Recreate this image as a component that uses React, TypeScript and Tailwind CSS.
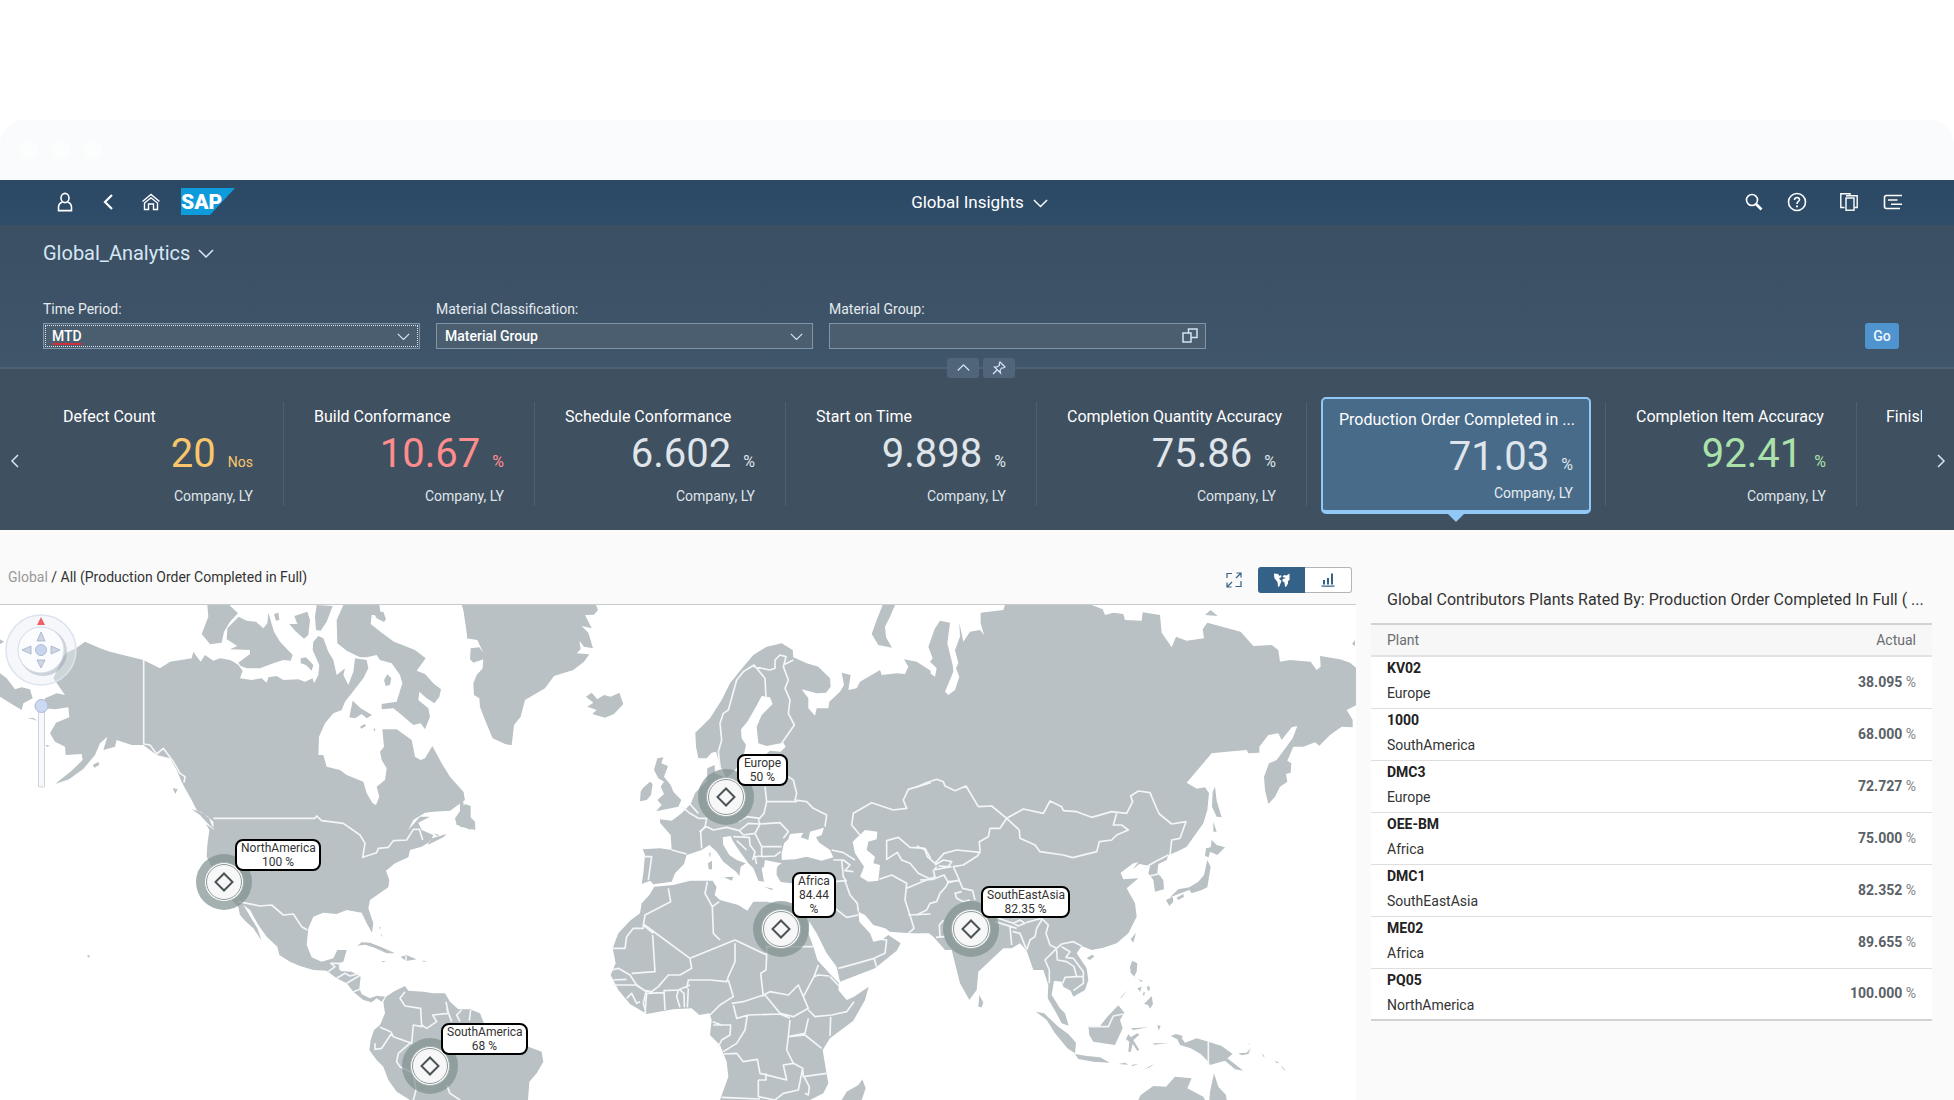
import React from "react";

const tiles = [
  { title: "Defect Count", value: "20", unit: "Nos", unitSize: "text-[14px]", color: "text-[#f9c66b]", width: "w-[251px]" },
  { title: "Build Conformance", value: "10.67", unit: "%", unitSize: "text-[16px]", color: "text-[#ff8d8d]", width: "w-[251px]" },
  { title: "Schedule Conformance", value: "6.602", unit: "%", unitSize: "text-[16px]", color: "text-[#dfe5ea]", width: "w-[251px]" },
  { title: "Start on Time", value: "9.898", unit: "%", unitSize: "text-[16px]", color: "text-[#dfe5ea]", width: "w-[251px]" },
  { title: "Completion Quantity Accuracy", value: "75.86", unit: "%", unitSize: "text-[16px]", color: "text-[#dfe5ea]", width: "w-[270px]" },
  { title: "Production Order Completed in ...", value: "71.03", unit: "%", unitSize: "text-[16px]", color: "text-[#dfe5ea]", width: "", selected: true },
  { title: "Completion Item Accuracy", value: "92.41", unit: "%", unitSize: "text-[16px]", color: "text-[#abe2ab]", width: "w-[251px]" },
];

const plants = [
  { id: "KV02", region: "Europe", actual: "38.095" },
  { id: "1000", region: "SouthAmerica", actual: "68.000" },
  { id: "DMC3", region: "Europe", actual: "72.727" },
  { id: "OEE-BM", region: "Africa", actual: "75.000" },
  { id: "DMC1", region: "SouthEastAsia", actual: "82.352" },
  { id: "ME02", region: "Africa", actual: "89.655" },
  { id: "PQ05", region: "NorthAmerica", actual: "100.000" },
];

// x / y are in map units (1356 x 495)
const pins = [
  { name: "NorthAmerica", value: "100 %", x: 224, y: 277, labelX: 235, labelY: 234, labelWidth: "w-[86px]" },
  { name: "Europe", value: "50 %", x: 726, y: 192, labelX: 737, labelY: 149, labelWidth: "w-[51px]" },
  { name: "Africa", value: "84.44 %", x: 781, y: 324, labelX: 792, labelY: 267, labelWidth: "w-[44px]" },
  { name: "SouthEastAsia", value: "82.35 %", x: 971, y: 324, labelX: 981, labelY: 281, labelWidth: "w-[89px]" },
  { name: "SouthAmerica", value: "68 %", x: 430, y: 461, labelX: 441, labelY: 418, labelWidth: "w-[87px]" },
];

// land shapes, west part
const landWest = [
  "M160,235 L195,285 170,280 135,295 132,325 165,328 205,322 208,352 168,368 150,400 165,425 195,440 197,465 245,462 248,480 215,512 165,552 207,538 250,507 285,465 300,430 322,410 310,450 345,440 350,420 395,435 430,435 470,465 510,475 530,510 545,545 555,565 575,600 590,630 625,650 642,690 618,672 628,690 622,735 620,770 640,810 660,870 700,905 715,920 720,945 735,962 760,985 785,1022 772,985 748,945 730,915 750,930 775,975 800,1010 832,1040 838,1065 870,1085 900,1098 940,1110 980,1112 1010,1135 1040,1150 1060,1175 1090,1200 1115,1207 1130,1195 1145,1205 1155,1190 1130,1187 1110,1195 1085,1183 1078,1165 1082,1130 1055,1115 1022,1113 1015,1090 1030,1085 1040,1050 1012,1050 1000,1075 965,1085 935,1072 920,1035 925,985 940,950 970,938 1010,942 1040,930 1085,938 1100,970 1116,998 1120,970 1105,925 1110,900 1165,862 1168,840 1158,812 1185,790 1225,772 1230,750 1265,740 1290,725 1300,705 1265,690 1255,668 1290,650 1260,650 1225,690 1240,660 1275,638 1300,635 1350,632 1395,600 1390,575 1350,530 1325,490 1297,438 1275,475 1262,480 1245,470 1235,420 1190,388 1147,388 1152,440 1140,455 1145,480 1160,505 1155,540 1130,560 1138,590 1128,615 1118,610 1100,580 1090,545 1040,525 1020,510 980,500 970,465 955,465 957,410 975,370 1000,340 1025,330 1035,305 1055,280 1090,235 1105,205 1100,180 1065,175 1060,215 1045,255 1030,225 1035,205 1010,225 1000,180 985,155 970,115 955,108 940,125 938,150 958,195 955,225 942,250 938,235 915,245 895,238 850,240 830,228 805,232 800,248 785,235 755,240 720,235 728,212 715,195 700,185 690,180 660,175 640,182 615,165 602,185 580,155 575,175 510,185 480,205 430,180 390,170 330,155 300,145 255,125 228,145 200,158 190,170Z",
  "M0,220 L20,235 45,268 65,262 90,268 98,295 70,310 65,330 40,315 0,290Z",
  "M0,118 L12,125 0,132Z",
  "M82,354 L100,354 112,362 98,358Z",
  "M135,434 L150,437 142,441Z",
  "M278,495 L295,486 298,494 284,503Z",
  "M622,15 L688,15 714,40 690,65 672,95 665,128 630,133 605,102 625,50Z",
  "M716,50 L740,62 768,65 790,85 802,70 805,38 822,95 840,125 878,165 872,182 850,180 820,190 780,205 740,205 722,198 715,188 750,162 750,150 690,148 712,138 680,118 682,85Z",
  "M822,42 L835,38 838,60 828,62Z",
  "M883,48 L922,35 930,60 925,105 912,116 885,92 868,72 892,72Z",
  "M950,15 L998,18 980,65 962,92 948,90 945,50Z",
  "M902,175 L918,172 940,195 935,212 918,195 902,190Z",
  "M1030,15 L1138,15 1142,40 1115,45 1112,72 1145,98 1182,125 1245,150 1277,175 1250,212 1275,222 1300,250 1323,268 1318,290 1303,310 1280,295 1258,275 1255,300 1285,325 1290,350 1275,388 1262,370 1240,375 1205,345 1180,325 1145,328 1145,312 1190,305 1207,250 1200,225 1175,190 1140,180 1130,165 1100,172 1080,172 1040,152 1012,130 1010,60Z",
  "M1152,240 L1162,223 1174,235 1170,255 1157,258Z",
  "M1058,302 L1082,325 1116,345 1100,355 1085,342 1065,355 1048,352Z",
  "M1080,380 L1094,372 1098,378 1084,386Z",
  "M1120,386 L1126,386 1124,396Z",
  "M1118,35 L1150,35 1158,58 1152,66 1130,55Z",
  "M1388,15 L1412,15 1412,118 1402,112Z",
  "M1365,655 L1395,612 1412,618 1412,690 1390,680 1370,675Z",
  "M1283,735 L1295,715 1340,702 1330,712Z",
  "M1300,700 L1318,705 1312,708Z",
  "M575,628 L602,635 628,655 640,665 640,687 618,665 600,645Z",
  "M518,565 L533,567 526,582Z",
  "M1072,1037 L1085,1027 1110,1028 1145,1042 1185,1060 1160,1060 1120,1042 1095,1034Z",
  "M1202,1070 L1220,1066 1250,1078 1218,1083Z",
  "M1142,1083 L1158,1084 1150,1087Z",
  "M1266,1082 L1280,1083 1272,1086Z",
  "M1138,980 L1142,982 1140,990Z M1142,1000 L1148,1010 1144,1008Z",
  "M262,1064 L271,1068 264,1073Z",
  "M1150,1205 L1158,1190 1180,1175 1215,1158 1225,1172 1270,1175 1300,1180 1335,1180 1350,1205 1375,1228 1410,1228 1440,1240 1452,1270 1520,1300 1585,1340 1625,1355 1630,1385 1610,1420 1588,1445 1584,1500 1230,1500 1190,1475 1165,1440 1150,1400 1130,1380 1108,1350 1112,1320 1122,1290 1140,1275 1155,1240Z",
];

// Europe, Africa and Greenland
const landCenter = [
  "M5,15 L408,15 414,30 402,44 375,45 395,85 365,78 385,98 399,145 372,140 358,122 362,148 350,160 388,163 372,185 340,210 282,228 255,265 195,300 182,350 162,375 155,436 135,432 98,415 75,360 60,320 58,295 42,285 40,250 50,225 68,205 70,178 40,188 30,178 32,145 58,142 70,158 52,120 20,115 28,80Z",
  "M378,290 L395,278 412,298 432,285 452,290 478,278 490,312 462,342 435,353 397,342 410,330 382,320 400,308Z",
  "M592,475 L610,472 604,490 624,498 612,530 632,555 640,575 664,600 655,620 625,626 588,634 605,615 592,600 612,582 602,560 612,545 595,535 582,510Z",
  "M548,565 L570,545 578,552 573,585 560,600 540,604 542,575Z",
  "M0,568 L12,580 8,598 15,635 45,665 46,690 25,685 0,680Z",
  "M545,852 L550,820 555,765 548,748 600,745 635,750 632,705 600,668 600,658 635,662 665,640 692,612 705,580 722,560 740,545 742,505 764,495 765,520 790,530 830,540 880,530 915,515 915,465 930,452 962,455 977,440 970,428 920,438 895,430 890,380 905,345 938,312 930,292 905,288 888,320 862,365 843,388 845,415 858,435 850,470 830,505 800,535 782,500 768,455 755,458 740,475 715,475 708,440 706,398 750,355 785,300 810,250 850,200 880,165 920,140 965,130 998,150 1000,172 1040,190 1075,200 1110,235 1112,260 1098,278 1070,280 1025,268 1045,295 1045,325 1065,347 1070,325 1105,325 1108,305 1140,275 1152,255 1145,218 1172,225 1165,270 1190,265 1200,245 1260,210 1265,225 1310,220 1335,222 1345,200 1332,178 1370,185 1412,212 1412,1000 1350,1000 1290,995 1275,985 1240,975 1215,945 1195,935 1198,965 1230,1000 1240,1025 1265,1020 1285,1005 1322,1030 1310,1052 1245,1105 1140,1145 1130,1100 1100,1060 1070,1000 1045,960 1040,930 1040,850 995,850 962,846 950,825 950,800 965,790 940,785 915,780 912,800 905,805 912,845 895,842 880,805 865,790 840,755 820,725 812,708 788,712 790,735 808,765 830,780 857,790 842,800 838,828 828,815 790,785 770,755 748,735 725,750 680,765 672,792 645,820 635,845 580,853 570,842Z",
  "M792,832 L820,830 816,842Z",
  "M744,790 L756,782 756,808 746,808Z M747,760 L752,757 750,775Z",
  "M912,860 L940,866 935,870Z",
  "M1268,15 L1305,15 1290,50 1275,80 1278,112 1296,143 1255,135 1235,102 1250,60Z",
  "M583,860 L640,855 690,842 758,842 770,862 764,885 780,900 835,915 862,932 880,905 920,905 1000,920 1045,935 1048,960 1045,1000 1060,1040 1072,1080 1110,1122 1137,1150 1135,1170 1160,1200 1182,1190 1226,1160 1215,1200 1180,1262 1110,1315 1088,1350 1098,1410 1105,1450 1090,1480 1050,1500 780,1500 805,1430 800,1385 780,1335 750,1305 755,1260 748,1240 718,1245 695,1225 640,1228 560,1242 510,1212 475,1170 452,1125 467,1090 458,1045 475,1000 510,962 540,940 545,910 568,885Z",
  "M1145,1500 L1160,1475 1195,1455 1207,1438 1217,1465 1205,1500Z",
];

// Asia and Oceania
const landEast = [
  "M-10,192 L45,230 50,205 30,185 38,175 25,140 45,85 60,62 90,68 82,130 98,195 100,215 75,275 85,285 105,270 118,230 108,205 115,190 105,150 120,110 118,68 130,125 150,95 180,90 192,105 182,70 182,38 250,30 255,15 515,15 548,28 555,45 580,38 610,42 615,60 665,62 668,37 720,45 725,98 755,142 768,110 800,122 852,115 848,88 862,68 962,95 1000,138 1055,135 1075,150 1080,185 1110,180 1172,185 1190,210 1202,200 1200,168 1260,178 1290,188 1310,205 1310,315 1280,330 1298,360 1298,382 1265,380 1230,405 1198,437 1185,427 1150,440 1120,440 1102,482 1114,490 1112,518 1098,522 1102,545 1080,560 1065,590 1045,612 1035,570 1032,530 1047,490 1070,480 1118,415 1132,378 1115,382 1085,420 1075,400 1045,405 1018,440 1018,458 985,460 980,450 920,455 875,460 800,548 830,566 855,562 867,580 862,630 850,670 800,740 770,755 745,765 740,780 715,792 712,818 730,840 732,868 705,875 700,840 685,820 690,798 658,792 638,808 655,787 640,790 602,818 610,838 655,835 620,865 645,910 650,950 625,1000 590,1030 550,1043 515,1050 485,1038 470,1060 500,1105 505,1140 495,1170 460,1190 452,1172 430,1160 425,1145 402,1142 395,1185 420,1225 435,1240 446,1277 425,1270 405,1232 383,1195 385,1155 370,1110 340,1110 320,1052 300,1030 275,1045 250,1045 175,1115 170,1170 148,1200 120,1150 95,1050 75,1050 40,1010 25,998 -10,1000Z",
  "M855,45 L872,30 893,48Z M1296,132 L1305,120 1305,138Z",
  "M878,575 L885,560 890,602 905,652 890,650 876,620Z M880,665 L890,695 880,695Z",
  "M875,720 L890,735 915,742 892,765 870,755 866,772 855,768 858,745 872,742Z",
  "M862,780 L872,800 862,862 845,870 815,880 808,870 768,885 750,892 775,868 808,862 835,845 852,825Z",
  "M738,900 L758,890 760,905 748,918Z M770,893 L790,882 792,890 775,900Z",
  "M700,826 L722,828 732,862 708,875Z",
  "M648,998 L640,1028 632,1018Z M500,1075 L515,1065 524,1068 510,1080Z",
  "M178,1185 L190,1208 185,1222 175,1220Z",
  "M348,1235 L372,1240 415,1280 445,1302 468,1328 465,1360 442,1345 405,1300 380,1260Z",
  "M465,1362 L500,1368 540,1372 570,1388 520,1385 475,1377Z",
  "M505,1278 L540,1278 562,1250 595,1216 613,1238 600,1260 608,1285 585,1335 520,1325 508,1305Z",
  "M625,1302 L632,1312 652,1300 658,1304 640,1320 658,1350 652,1352 638,1332 632,1356 625,1355 628,1325 618,1318Z",
  "M632,1285 L685,1282 640,1290Z M712,1275 L722,1278 716,1292Z M700,1330 L745,1330 702,1334Z",
  "M595,1392 L615,1388 625,1394Z M632,1395 L655,1392 640,1398Z M672,1408 L702,1392 690,1402Z",
  "M637,1082 L652,1090 650,1115 642,1130 650,1138 632,1118 630,1100Z",
  "M672,1212 L695,1188 699,1212 690,1226 684,1215Z",
  "M652,1165 L665,1160 660,1175Z M680,1160 L688,1158 690,1170 684,1172Z M668,1180 L675,1175 672,1190Z M600,1195 L622,1170 606,1192Z M655,1138 L668,1142 664,1146Z",
  "M752,1308 L768,1302 788,1308 785,1315 795,1328 830,1315 865,1325 905,1338 938,1362 922,1375 970,1412 945,1408 915,1382 870,1395 865,1385 842,1362 812,1345 780,1335 772,1318Z",
  "M955,1360 L980,1358 992,1345 985,1362 965,1366Z M1025,1358 L1034,1370 1030,1370Z M1065,1382 L1080,1390 1068,1388Z M1082,1395 L1098,1412 1090,1408Z M980,1328 L992,1334 985,1332Z",
  "M655,1500 L662,1485 700,1458 738,1460 765,1430 815,1435 802,1465 850,1490 855,1500Z M868,1500 L870,1475 882,1420 895,1460 918,1485 920,1500Z",
];

const bordersWest =
  "M640,655 L945,655 950,648 965,662 1030,670 1080,705 1095,730 1088,772 1130,758 1135,745 1165,742 1180,722 1220,720 1240,688 1258,688 1268,720 M431,180 L431,432 450,435 470,462 490,445 520,485 540,520 555,530 552,548 M715,905 L780,918 815,915 850,945 880,942 905,980 922,990 M985,1115 L1005,1100 992,1090 1018,1090 1020,1110 M1010,1135 L1035,1120 1050,1128 1078,1120 M1040,1150 L1078,1127 M1060,1175 L1080,1168 M1215,1175 L1200,1195 1215,1218 1262,1225 1265,1280 1240,1275 1235,1330 1180,1310 1172,1295 1140,1282 M1265,1275 L1280,1285 1310,1265 1298,1245 1345,1240 1338,1205 M1340,1225 L1355,1265 M1385,1230 L1370,1245 1380,1264 M1175,1300 L1145,1345 1125,1348 1125,1330 M1235,1325 L1195,1360 1190,1385 1200,1400 1240,1420 1248,1470 1240,1500 M1340,1455 L1350,1480 1380,1500 M1412,1230 L1408,1262 M1218,1068 L1218,1083";

const bordersCenter =
  "M780,500 L775,455 785,420 780,370 790,340 805,330 830,240 850,215 882,195 915,235 918,295 M882,200 L930,210 945,205 945,180 960,165 978,170 970,200 985,240 975,265 990,300 985,340 1003,375 965,430 M970,195 L1000,180 M985,530 L1000,540 1010,580 1005,600 1040,605 1060,625 1100,645 1095,680 M1010,605 L920,605 915,560 M920,605 L912,640 895,660 M895,660 L900,672 960,668 985,695 970,715 M900,672 L885,700 905,740 965,740 M838,692 L865,670 900,672 M718,695 L740,680 760,690 800,682 838,692 850,705 885,700 M835,665 L860,650 900,655 M665,620 L690,640 715,655 740,655 735,680 722,695 725,745 M690,612 L715,640 M635,750 L680,762 M550,770 L575,770 565,840 M820,710 L868,712 870,735 885,755 878,780 M830,722 L860,750 M905,740 L905,768 885,770 890,792 M905,770 L945,768 962,755 M1200,705 L1175,675 1180,640 1235,608 1300,630 1340,625 1330,600 1345,568 1412,548 M1280,780 L1280,722 1315,712 1350,742 1395,745 1412,775 M1280,778 L1312,757 1325,780 1350,790 1375,820 1412,838 M1258,838 L1295,825 1340,850 1335,900 1348,940 1362,985 1345,1000 M1340,865 L1412,835 M1345,945 L1412,942 M1115,750 L1150,758 1185,780 M1120,780 L1150,780 1170,795 1155,812 1180,815 M1145,780 L1150,830 1160,845 M1125,845 L1155,842 1170,885 1192,910 1195,935 M1125,925 L1160,952 1195,945 M1135,1105 L1190,1090 1242,1075 1250,1100 M1242,1075 L1275,1060 1280,1020 1265,1018 M625,865 L632,905 555,945 550,975 M458,1045 L495,1045 500,1010 520,985 550,985 550,972 L690,1075 825,1020 M550,975 L580,1000 M690,1075 L695,1105 660,1125 625,1125 595,1160 575,1175 555,1172 530,1155 510,1125 475,1105 455,1110 M515,1120 L585,1115 578,1005 M742,845 L735,880 757,920 760,1000 780,1020 M757,920 L778,905 M825,1020 L920,1065 918,1110 902,1120 910,1190 M920,1065 L920,1040 1060,1040 M825,1030 L825,1085 805,1130 800,1145 750,1140 685,1140 680,1165 M805,1140 L820,1190 780,1215 750,1245 M815,1210 L850,1205 910,1185 930,1175 985,1185 1015,1155 1030,1190 1062,1130 1075,1125 1108,1128 M1062,1130 L1075,1095 M1030,1190 L1045,1225 1000,1250 960,1240 915,1185 M1045,1230 L1065,1250 1115,1245 1160,1235 1182,1205 M1112,1250 L1110,1308 M1045,1255 L1035,1300 985,1310 990,1260 M865,1245 L960,1242 990,1255 M862,1245 L855,1290 830,1330 790,1355 M820,1215 L830,1255 865,1245 M758,1265 L785,1275 M760,1275 L812,1275 810,1305 785,1320 775,1340 M792,1362 L830,1360 850,1385 892,1378 900,1420 940,1430 980,1440 970,1395 1000,1390 980,1350 985,1310 M985,1310 L1035,1305 1085,1345 M1000,1390 L1028,1405 1030,1430 1100,1420 M895,1440 L918,1440 918,1420 M895,1440 L895,1490 945,1500 970,1480 1015,1470 1028,1405 M785,1492 L900,1497 M1032,1430 L1048,1460 1045,1485 1035,1480 M615,1230 L612,1172 655,1170 650,1190 660,1222 M658,1168 L672,1180 673,1222 M685,1165 L682,1222 M555,1240 L560,1180 610,1178 M655,1170 L690,1155 M460,1140 L500,1138 M458,1155 L528,1155 558,1175 550,1210 558,1238 M500,1195 L515,1180 530,1210 540,1205 M1110,1130 L1137,1158";

const bordersEast =
  "M-10,562 L15,550 50,538 70,545 75,558 105,572 138,558 175,620 215,618 260,655 240,685 210,685 205,710 178,725 180,755 M260,655 L310,627 370,640 390,603 425,620 430,632 470,635 515,652 575,635 620,640 638,605 632,588 655,573 690,578 712,630 718,642 755,672 798,665 780,715 755,720 750,765 M590,640 L580,675 605,675 625,690 590,705 575,720 538,725 530,755 458,773 430,765 360,755 345,735 300,715 298,690 260,655 M-10,738 L15,750 22,770 45,790 M45,790 L72,760 110,750 180,757 172,768 130,795 100,800 118,840 85,848 72,825 40,838 0,840 M45,795 L70,780 95,785 85,800 55,798 M20,840 L45,830 40,812 50,800 M-10,945 L20,930 30,910 50,905 60,880 78,860 85,845 118,842 M118,842 L128,865 158,872 165,900 M150,900 L130,905 110,895 105,880 125,875 M60,1010 L58,975 70,960 M48,1012 L75,1010 M225,965 L290,985 M235,955 L280,970 M280,970 L300,960 315,970 295,978 280,970 M270,980 L275,1035 M278,995 L300,1000 305,1012 318,1045 M318,968 L345,960 365,955 385,975 378,1000 390,1035 410,1045 M365,960 L350,985 345,1010 330,1020 320,1050 M410,1045 L425,1032 460,1025 485,1038 M410,1045 L375,1080 388,1110 388,1150 M410,1050 L412,1080 440,1085 462,1100 470,1130 435,1132 428,1150 M425,1040 L450,1055 438,1072 460,1075 490,1115 490,1150 460,1172 M470,1130 L490,1130 M672,805 L705,785 745,765 M690,828 L722,820 M505,1280 L565,1280 580,1248 610,1242 M865,1325 L865,1395 M95,800 L40,810";

function WorldMap() {
  return (
    <svg viewBox="0 15 4068 1485" className="block w-full" role="img" aria-label="World map">
      <g fill="#b9c1c4">
        <path d={landWest.join(" ")} />
        <path d={landCenter.join(" ")} transform="translate(1380)" />
        <path d={landEast.join(" ")} transform="translate(2760)" />
      </g>
      <g fill="#fff" transform="translate(1380)">
        <path d="M965,760 L972,730 985,718 990,702 1030,698 1022,712 1045,720 1050,695 1092,683 1085,705 1068,712 1078,728 1110,750 1120,772 1085,782 1040,770 1005,778 965,780Z" />
        <path d="M1178,725 L1215,690 1252,695 1250,718 1225,725 1220,750 1245,770 1240,790 1260,795 1255,842 1225,845 1200,830 1212,800 1185,760Z" />
        <path d="M940,785 L955,795 945,815 952,840 930,840 915,805Z" />
      </g>
      <g fill="none" stroke="#f4f6f7" strokeWidth="5" strokeLinejoin="round">
        <path d={bordersWest} />
        <path d={bordersCenter} transform="translate(1380)" />
        <path d={bordersEast} transform="translate(2760)" />
      </g>
    </svg>
  );
}

function MapControls() {
  return (
    <svg viewBox="0 0 80 190" className="absolute left-0 top-0 w-20" aria-hidden="true">
      <circle cx="41" cy="45" r="35" fill="#e9edf5" fillOpacity="0.45" stroke="#dde3ee" strokeWidth="1.5" />
      <circle cx="43" cy="47" r="24" fill="#7f8ca0" fillOpacity="0.35" />
      <circle cx="41" cy="45" r="23" fill="#fbfcfe" stroke="#d5dbe6" strokeWidth="1" />
      <path d="M41,12 L45,20 H37Z" fill="#ee5f66" />
      <g fill="#cfd6e0" stroke="#9fb0cb" strokeWidth="0.8">
        <path d="M41,27 L45,36 H37Z" />
        <path d="M41,63 L45,55 H37Z" />
        <path d="M22,45 L31,41 V49Z" />
        <path d="M60,45 L51,41 V49Z" />
        <circle cx="41" cy="45" r="5.5" fill="#c9d5ee" />
      </g>
      <rect x="38.5" y="106" width="6" height="76" rx="1" fill="#f7f8fb" stroke="#cfd3da" strokeWidth="1" />
      <circle cx="41.5" cy="101" r="6.5" fill="#cdd9f1" stroke="#a9b9d8" strokeWidth="1" />
    </svg>
  );
}

function ChevronDown({ className }: { className: string }) {
  return (
    <svg viewBox="0 0 16 9" className={className} fill="none" stroke="currentColor" strokeWidth="1.5" aria-hidden="true">
      <path d="M1,1 L8,8 L15,1" />
    </svg>
  );
}

function Tile({ tile }: { tile: (typeof tiles)[number] }) {
  const body = (
    <>
      <span className="block whitespace-nowrap text-[16px] leading-5 text-white">{tile.title}</span>
      <span className={`mt-[7px] flex items-baseline justify-end gap-3 ${tile.color}`}>
        <span className="text-[40px] leading-10">{tile.value}</span>
        <span className={`leading-5 ${tile.unitSize}`}>{tile.unit}</span>
      </span>
    </>
  );

  if (tile.selected) {
    return (
      <div className="w-[299px] shrink-0 border-r border-[#4d5f70] px-[14px]">
        <button
          type="button"
          className="relative -mt-[5px] flex h-[117px] w-full flex-col rounded-[5px] border-2 border-b-4 border-[#91c8f6] bg-[#486b8a] px-4 pt-[11px] text-left *:w-full"
        >
          {body}
          <span className="mt-2 block text-right text-[14px] leading-4 text-[#e6ebf0]">Company, LY</span>
        </button>
        <div className="mx-auto h-0 w-0 border-x-8 border-t-8 border-x-transparent border-t-[#91c8f6]"></div>
      </div>
    );
  }

  return (
    <button
      type="button"
      className={`flex h-[104px] shrink-0 flex-col border-r border-[#4d5f70] px-[30px] pt-[5px] text-left *:w-full ${tile.width}`}
    >
      {body}
      <span className="mt-[14px] block text-right text-[14px] leading-4 text-[#dfe5ea]">Company, LY</span>
    </button>
  );
}

export default function App() {
  return (
    <div className="h-screen overflow-hidden bg-white font-[Roboto,sans-serif]">
      <div className="mt-[120px] flex h-[60px] items-center gap-[14px] rounded-t-[24px] bg-[#fafbfd] px-5">
        <span className="h-[18px] w-[18px] rounded-full bg-[#fcfdfd]"></span>
        <span className="h-[18px] w-[18px] rounded-full bg-[#fcfdfd]"></span>
        <span className="h-[18px] w-[18px] rounded-full bg-[#fcfdfd]"></span>
      </div>

      <header className="flex h-[45px] items-center bg-linear-to-b from-[#2b4865] to-[#2f4d69] pb-[2px] pl-14 pr-[51px] text-white">
        <div className="flex flex-1 items-center">
          <button type="button" aria-label="User" className="w-[18px]">
            <svg viewBox="0 0 18 20" className="h-5 w-[18px]" fill="none" stroke="currentColor" strokeWidth="1.6">
              <ellipse cx="9" cy="6" rx="4" ry="4.6" />
              <path d="M6.5,10 C3.5,11 2.5,13 2.5,15.5 V18.6 H15.5 V15.5 C15.5,13 14.5,11 11.5,10" />
            </svg>
          </button>
          <button type="button" aria-label="Back" className="ml-[26px] w-4">
            <svg viewBox="0 0 16 18" className="h-[18px] w-4" fill="none" stroke="currentColor" strokeWidth="2.2">
              <path d="M12,2 L5,9 L12,16" />
            </svg>
          </button>
          <button type="button" aria-label="Home" className="ml-[25px] w-5">
            <svg viewBox="0 0 20 18" className="h-[18px] w-5" fill="none" stroke="currentColor" strokeWidth="1.4">
              <path d="M1.5,8.5 L10,1.5 L18.5,8.5" />
              <path d="M3.5,10 L10,4.8 L16.5,10 V16.5 H12.5 V11 H7.5 V16.5 H3.5Z" />
            </svg>
          </button>
          <a href="#" aria-label="SAP" className="ml-5">
            <svg viewBox="0 0 54 27" className="h-[27px] w-[54px]">
              <path d="M0,0 H54 L29,27 H0Z" fill="#0d9bdc" />
              <text x="0" y="21" fontSize="21" fontWeight="900" fill="#fff" fontFamily="Roboto, sans-serif">SAP</text>
            </svg>
          </a>
        </div>
        <button type="button" className="flex items-center gap-[9px] text-[17px] leading-6">
          Global Insights
          <ChevronDown className="mt-1 w-[15px]" />
        </button>
        <div className="flex flex-1 items-center justify-end">
          <button type="button" aria-label="Search">
            <svg viewBox="0 0 18 18" className="h-[18px] w-[18px]" fill="none" stroke="currentColor" strokeWidth="1.6">
              <circle cx="7" cy="7" r="5.5" />
              <path d="M11,11 L16.5,16.5" strokeWidth="2.6" />
            </svg>
          </button>
          <button type="button" aria-label="Help" className="ml-6">
            <svg viewBox="0 0 20 20" className="h-5 w-5" fill="none" stroke="currentColor" strokeWidth="1.6">
              <circle cx="10" cy="10" r="8.5" />
              <path d="M7.5,8 C7.5,4.5 12.7,4.8 12.5,7.8 C12.4,9.5 10,9.6 10,12" />
              <path d="M10,13.5 V15.3" strokeWidth="2" />
            </svg>
          </button>
          <button type="button" aria-label="Copy" className="ml-8">
            <svg viewBox="0 0 20 20" className="h-5 w-5" fill="none" stroke="currentColor" strokeWidth="1.4">
              <path d="M5.5,15.5 H1.8 V1.8 H11 V3.5" />
              <rect x="7" y="6" width="8" height="12.2" />
              <path d="M7,3.8 H18.2 V15.5 H15.5" />
            </svg>
          </button>
          <button type="button" aria-label="Notifications" className="ml-6">
            <svg viewBox="0 0 20 16" className="h-4 w-5" fill="none" stroke="currentColor" strokeWidth="1.6">
              <path d="M19,1.5 H3.5 Q1.5,1.5 1.5,3.5 V12.5 Q1.5,14.5 3.5,14.5 H17" />
              <path d="M5,6 H14.5 M8,10.2 H19" />
            </svg>
          </button>
        </div>
      </header>

      <section className="relative h-[144px] border-b-2 border-[#4b6375] bg-linear-to-b from-[#3b4f63] to-[#3f5569] pl-[43px] pr-[55px] text-[#e4eaef]">
        <button type="button" className="flex items-center gap-2 pt-4 text-[20px] leading-6 text-[#d5e6f5]">
          Global_Analytics
          <ChevronDown className="w-4" />
        </button>
        <div className="mt-[35px] flex items-end gap-4">
          <div className="w-[377px]">
            <label htmlFor="period" className="block text-[14px] leading-[18px]">Time Period:</label>
            <div className="relative mt-[5px]">
              <select
                id="period"
                className="block h-[26px] w-full appearance-none border border-[#8096a8] bg-[#4a5e6f] px-2 text-[14px] font-medium leading-5 text-white underline decoration-[#d3303f] decoration-2 underline-offset-2 outline-1 -outline-offset-3 outline-dotted outline-[#dbe6ee]"
              >
                <option>MTD</option>
              </select>
              <ChevronDown className="pointer-events-none absolute right-[10px] top-[10px] w-[13px] text-[#cfe4f6]" />
            </div>
          </div>
          <div className="w-[377px]">
            <label htmlFor="classification" className="block text-[14px] leading-[18px]">Material Classification:</label>
            <div className="relative mt-[5px]">
              <select
                id="classification"
                className="block h-[26px] w-full appearance-none border border-[#8096a8] bg-[#4a5e6f] px-2 text-[14px] font-medium leading-5 text-white"
              >
                <option>Material Group</option>
              </select>
              <ChevronDown className="pointer-events-none absolute right-[10px] top-[10px] w-[13px] text-[#cfe4f6]" />
            </div>
          </div>
          <div className="w-[377px]">
            <label htmlFor="group" className="block text-[14px] leading-[18px]">Material Group:</label>
            <div className="relative mt-[5px]">
              <input
                id="group"
                type="text"
                className="block h-[26px] w-full border border-[#8096a8] bg-[#4a5e6f] px-2 text-[14px] text-white"
              />
              <button type="button" aria-label="Value help" className="absolute right-2 top-[5px] text-[#cfe4f6]">
                <svg viewBox="0 0 16 15" className="h-[15px] w-4" fill="none" stroke="currentColor" strokeWidth="1.5">
                  <rect x="1" y="5" width="8" height="9" />
                  <path d="M6.5,5 V1 H15 V9.5 H9" />
                </svg>
              </button>
            </div>
          </div>
          <button type="button" className="ml-auto h-[26px] w-[34px] rounded-[3px] bg-[#4f93cf] text-[14px] font-medium text-[#eef6fd]">
            Go
          </button>
        </div>
        <div className="absolute inset-x-0 -bottom-[11px] z-10 flex justify-center gap-1 pl-2">
          <button type="button" aria-label="Collapse header" className="flex h-5 w-8 items-center justify-center rounded-[3px] bg-[#50657a] text-[#d5e6f5]">
            <ChevronDown className="w-[13px] rotate-180" />
          </button>
          <button type="button" aria-label="Pin header" className="flex h-5 w-8 items-center justify-center rounded-[3px] bg-[#50657a] text-[#d5e6f5]">
            <svg viewBox="0 0 14 14" className="h-[14px] w-[14px]" fill="none" stroke="currentColor" strokeWidth="1.2">
              <path d="M8,1 L13,6 L11.5,7 L9.5,7 L8,9.5 L8.5,12 L2.5,6 L5,6 L7.5,4.3 L7.3,2.3Z" />
              <path d="M5,9 L1,13" />
            </svg>
          </button>
        </div>
      </section>

      <section className="flex h-[161px] bg-[#3f5060] pt-[33px]">
        <button type="button" aria-label="Previous" className="flex h-[118px] w-[33px] shrink-0 items-center pl-[10px] text-[#d5e6f5]">
          <svg viewBox="0 0 10 14" className="h-[14px] w-[10px]" fill="none" stroke="currentColor" strokeWidth="1.5">
            <path d="M8,1 L2,7 L8,13" />
          </svg>
        </button>
        <div className="flex h-[104px] min-w-0 flex-1 overflow-x-clip">
          {tiles.map((tile) => (
            <Tile key={tile.title} tile={tile} />
          ))}
          <div className="min-w-0 flex-1 overflow-hidden whitespace-nowrap pl-[29px] pt-[5px] text-[16px] leading-5 text-white">
            Finish
          </div>
        </div>
        <button type="button" aria-label="Next" className="flex h-[118px] w-8 shrink-0 items-center justify-end pr-2 text-[#d5e6f5]">
          <svg viewBox="0 0 10 14" className="h-[14px] w-[10px]" fill="none" stroke="currentColor" strokeWidth="1.5">
            <path d="M2,1 L8,7 L2,13" />
          </svg>
        </button>
      </section>

      <main className="flex h-[570px] bg-[#fafafa]">
        <div className="min-w-0 flex-1">
          <div className="flex h-[75px] items-start justify-between border-b border-[#c8cacb] pl-2 pr-1">
            <nav className="pt-[37px] text-[14px] leading-5 text-[#333]">
              <a href="#" className="text-[#999]">Global</a> / All (Production Order Completed in Full)
            </nav>
            <div className="flex items-center gap-4 pt-[37px]">
              <button type="button" aria-label="Full screen" className="text-[#346187]">
                <svg viewBox="0 0 16 16" className="h-4 w-4" fill="none" stroke="currentColor" strokeWidth="1.2">
                  <path d="M1,6 V1.5 H6 M15,9 V14.5 H9.5" />
                  <path d="M10.5,1 H15 V5.5 M15,1 L10,6 M1,10.5 V15 H5.5 M1,15 L6,10" />
                </svg>
              </button>
              <div className="flex">
                <button type="button" aria-label="Map" className="flex h-[26px] w-[47px] items-center justify-center rounded-l-[3px] bg-[#346187] text-white">
                  <svg viewBox="0 0 16 14" className="h-[14px] w-4" fill="currentColor">
                    <path d="M0,0.5 L4,1 L5.5,3 L7,2 L7.5,4 L5,5.5 L7.5,8 L6.5,10.5 L5,14 L4,13.5 L3.5,9 L1.5,6.5 L0.3,5Z" />
                    <path d="M8.5,4 L10,2 L12.5,2.5 L15.5,0.5 V7 L14,8 V10.5 L12,14 L11,13.5 L10.5,9.5 L8.3,8 L8.8,6 L12,5Z" />
                  </svg>
                </button>
                <button type="button" aria-label="Chart" className="flex h-[26px] w-[47px] items-center justify-center rounded-r-[3px] border border-l-0 border-[#b3b6b8] bg-white text-[#346187]">
                  <svg viewBox="0 0 14 14" className="h-[14px] w-[14px]" fill="currentColor">
                    <path d="M2,7 H4 V11.5 H2Z M6,5 H8 V11.5 H6Z M10,0.5 H12 V11.5 H10Z M0.5,12.5 H13.5 V13.7 H0.5Z" />
                  </svg>
                </button>
              </div>
            </div>
          </div>
          <div className="relative overflow-hidden bg-white">
            <WorldMap />
            <MapControls />
            {pins.map((pin) => (
              <div key={pin.name}>
                <button
                  type="button"
                  aria-label={pin.name}
                  className="absolute flex h-14 w-14 -translate-x-1/2 -translate-y-1/2 items-center justify-center rounded-full bg-[#7f8e8f]/70"
                  style={{ left: `${(pin.x / 1356) * 100}%`, top: `${(pin.y / 495) * 100}%` }}
                >
                  <span className="flex h-10 w-10 items-center justify-center rounded-full border border-[#a3adae] bg-white">
                    <span className="flex h-[36px] w-[36px] items-center justify-center rounded-full border border-[#8d9899] bg-[#f7f7f7]">
                      <span className="h-[14px] w-[14px] rotate-45 border-2 border-[#4c5457]"></span>
                    </span>
                  </span>
                </button>
                <div
                  className={`absolute rounded-[8px] border-2 border-black bg-white px-1 text-center text-[12px] leading-[14px] text-[#333] ${pin.labelWidth}`}
                  style={{ left: `${(pin.labelX / 1356) * 100}%`, top: `${(pin.labelY / 495) * 100}%` }}
                >
                  {pin.name} {pin.value}
                </div>
              </div>
            ))}
          </div>
        </div>

        <aside className="w-[598px] shrink-0 pl-[15px] pr-[22px] pt-[58px]">
          <h2 className="whitespace-nowrap pl-4 text-[16px] leading-6 text-[#333]">
            Global Contributors Plants Rated By: Production Order Completed In Full ( ...
          </h2>
          <table className="mt-[11px] w-full border-collapse border-y-2 border-[#d0d2d3] text-[14px]">
            <thead>
              <tr className="h-8 border-b-2 border-[#e2e2e2] bg-[#f7f7f7] text-[#6a6d70]">
                <th className="px-4 text-left font-normal">Plant</th>
                <th className="px-4 text-right font-normal">Actual</th>
              </tr>
            </thead>
            <tbody>
              {plants.map((plant) => (
                <tr key={plant.id} className="h-[52px] border-b border-[#dedede] bg-white">
                  <td className="px-4 align-top text-[#333]">
                    <div className="pt-px font-bold leading-5 text-[#222]">{plant.id}</div>
                    <div className="mt-[5px] leading-5">{plant.region}</div>
                  </td>
                  <td className="px-4 text-right text-[#7d8285]">
                    <span className="font-bold text-[#5a6167]">{plant.actual}</span> %
                  </td>
                </tr>
              ))}
            </tbody>
          </table>
        </aside>
      </main>
    </div>
  );
}
